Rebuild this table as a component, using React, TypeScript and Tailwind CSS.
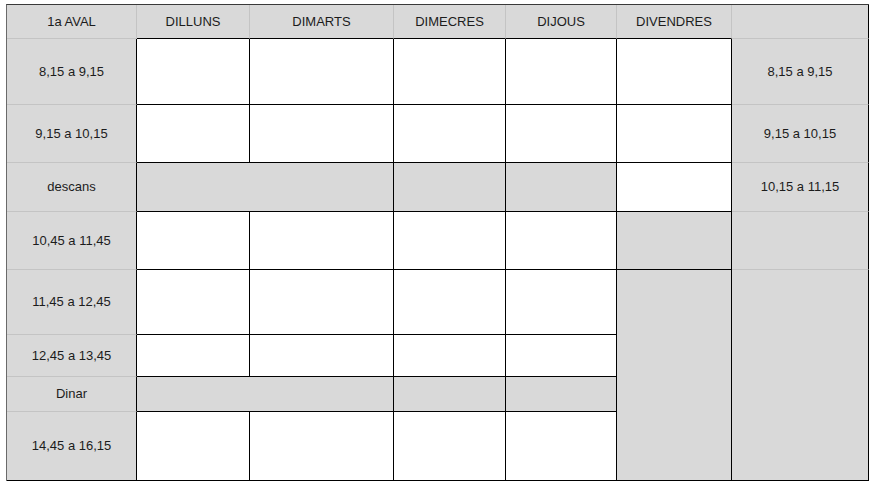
import React from "react";

const G = "bg-[#d9d9d9]";
const W = "bg-white";

type C = { c: string; t?: string; cls: string };

const LB = "border-b-[#c4c4c4]";
const LR = "border-r-[#c4c4c4]";
const BB = "border-b-black";
const BR = "border-r-black";

const cells: C[] = [
  // header
  { c: "col-start-1 row-start-1", t: "1a AVAL", cls: `${G} ${LR} ${LB}` },
  { c: "col-start-2 row-start-1", t: "DILLUNS", cls: `${G} ${LR} ${BB}` },
  { c: "col-start-3 row-start-1", t: "DIMARTS", cls: `${G} ${LR} ${BB}` },
  { c: "col-start-4 row-start-1", t: "DIMECRES", cls: `${G} ${LR} ${BB}` },
  { c: "col-start-5 row-start-1", t: "DIJOUS", cls: `${G} ${LR} ${BB}` },
  { c: "col-start-6 row-start-1", t: "DIVENDRES", cls: `${G} ${LR} ${BB}` },
  { c: "col-start-7 row-start-1", cls: `${G} ${BR} ${LB}` },
  // first column
  { c: "col-start-1 row-start-2", t: "8,15 a 9,15", cls: `${G} ${BR} ${LB}` },
  { c: "col-start-1 row-start-3", t: "9,15 a 10,15", cls: `${G} ${BR} ${LB}` },
  { c: "col-start-1 row-start-4", t: "descans", cls: `${G} ${BR} ${LB}` },
  { c: "col-start-1 row-start-5", t: "10,45 a 11,45", cls: `${G} ${BR} ${LB}` },
  { c: "col-start-1 row-start-6", t: "11,45 a 12,45", cls: `${G} ${BR} ${LB}` },
  { c: "col-start-1 row-start-7", t: "12,45 a 13,45", cls: `${G} ${BR} ${LB}` },
  { c: "col-start-1 row-start-8", t: "Dinar", cls: `${G} ${BR} ${LB}` },
  { c: "col-start-1 row-start-9", t: "14,45 a 16,15", cls: `${G} ${BR} ${BB}` },
  // last column
  { c: "col-start-7 row-start-2", t: "8,15 a 9,15", cls: `${G} ${BR} ${LB}` },
  { c: "col-start-7 row-start-3", t: "9,15 a 10,15", cls: `${G} ${BR} ${LB}` },
  { c: "col-start-7 row-start-4", t: "10,15 a 11,15", cls: `${G} ${BR} ${LB}` },
  { c: "col-start-7 row-start-5", cls: `${G} ${BR} ${LB}` },
  { c: "col-start-7 row-start-6 row-span-4", cls: `${G} ${BR} ${BB}` },
  // row 2
  { c: "col-start-2 row-start-2", cls: `${W} ${BR} ${BB}` },
  { c: "col-start-3 row-start-2", cls: `${W} ${BR} ${BB}` },
  { c: "col-start-4 row-start-2", cls: `${W} ${BR} ${BB}` },
  { c: "col-start-5 row-start-2", cls: `${W} ${BR} ${BB}` },
  { c: "col-start-6 row-start-2", cls: `${W} ${BR} ${BB}` },
  // row 3
  { c: "col-start-2 row-start-3", cls: `${W} ${BR} ${BB}` },
  { c: "col-start-3 row-start-3", cls: `${W} ${BR} ${BB}` },
  { c: "col-start-4 row-start-3", cls: `${W} ${BR} ${BB}` },
  { c: "col-start-5 row-start-3", cls: `${W} ${BR} ${BB}` },
  { c: "col-start-6 row-start-3", cls: `${W} ${BR} ${BB}` },
  // row 4 descans
  { c: "col-start-2 col-span-2 row-start-4", cls: `${G} ${BR} ${BB}` },
  { c: "col-start-4 row-start-4", cls: `${G} ${BR} ${BB}` },
  { c: "col-start-5 row-start-4", cls: `${G} ${BR} ${BB}` },
  { c: "col-start-6 row-start-4", cls: `${W} ${BR} ${BB}` },
  // row 5
  { c: "col-start-2 row-start-5", cls: `${W} ${BR} ${BB}` },
  { c: "col-start-3 row-start-5", cls: `${W} ${BR} ${BB}` },
  { c: "col-start-4 row-start-5", cls: `${W} ${BR} ${BB}` },
  { c: "col-start-5 row-start-5", cls: `${W} ${BR} ${BB}` },
  { c: "col-start-6 row-start-5", cls: `${G} ${BR} ${BB}` },
  // row 6
  { c: "col-start-2 row-start-6", cls: `${W} ${BR} ${BB}` },
  { c: "col-start-3 row-start-6", cls: `${W} ${BR} ${BB}` },
  { c: "col-start-4 row-start-6", cls: `${W} ${BR} ${BB}` },
  { c: "col-start-5 row-start-6", cls: `${W} ${BR} ${BB}` },
  { c: "col-start-6 row-start-6 row-span-4", cls: `${G} ${BR} ${BB}` },
  // row 7
  { c: "col-start-2 row-start-7", cls: `${W} ${BR} ${BB}` },
  { c: "col-start-3 row-start-7", cls: `${W} ${BR} ${BB}` },
  { c: "col-start-4 row-start-7", cls: `${W} ${BR} ${BB}` },
  { c: "col-start-5 row-start-7", cls: `${W} ${BR} ${BB}` },
  // row 8 dinar
  { c: "col-start-2 col-span-2 row-start-8", cls: `${G} ${BR} ${BB}` },
  { c: "col-start-4 row-start-8", cls: `${G} ${BR} ${BB}` },
  { c: "col-start-5 row-start-8", cls: `${G} ${BR} ${BB}` },
  // row 9
  { c: "col-start-2 row-start-9", cls: `${W} ${BR} ${BB}` },
  { c: "col-start-3 row-start-9", cls: `${W} ${BR} ${BB}` },
  { c: "col-start-4 row-start-9", cls: `${W} ${BR} ${BB}` },
  { c: "col-start-5 row-start-9", cls: `${W} ${BR} ${BB}` },
];

export default function App() {
  return (
    <div className="w-[874px] h-[481px] bg-white pl-[6px] pt-[4px] overflow-hidden">
      <div
        className="grid w-fit grid-cols-[130px_113px_144px_112px_111px_115px_137px] grid-rows-[34px_66px_58px_49px_58px_65px_42px_35px_69px] border-t border-l border-t-[#3a3a3a] border-l-[#6a6a6a] text-[13px] text-[#1c1c1c]"
        style={{ fontFamily: '"Liberation Sans", Arial, sans-serif' }}
      >
        {cells.map((cell, i) => (
          <div
            key={i}
            className={`${cell.c} ${cell.cls} border-r border-b flex items-center justify-center`}
          >
            {cell.t}
          </div>
        ))}
      </div>
    </div>
  );
}
